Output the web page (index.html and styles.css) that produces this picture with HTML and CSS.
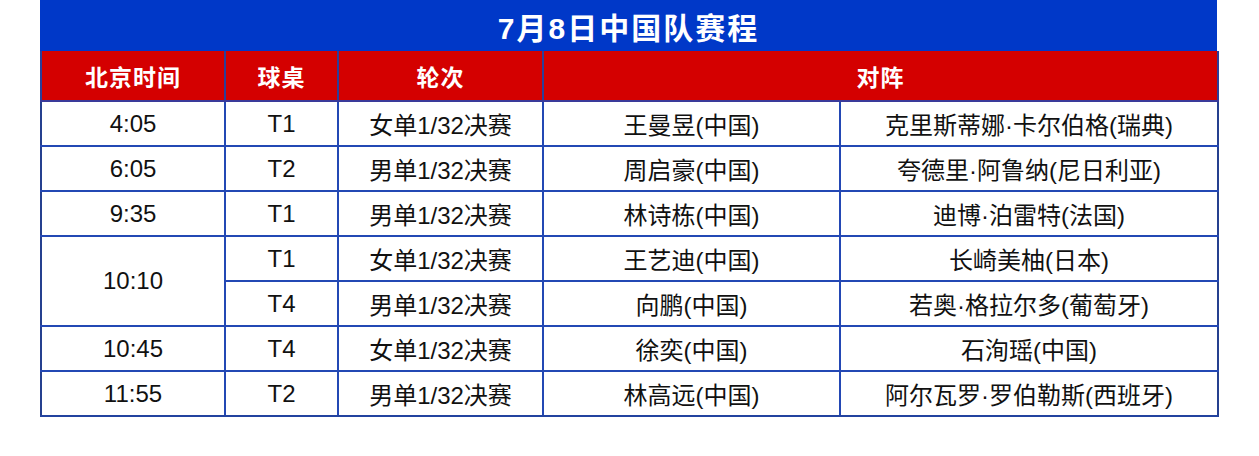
FILE: index.html
```html
<!DOCTYPE html>
<html lang="zh-CN">
<head>
<meta charset="utf-8">
<title>7月8日中国队赛程</title>
<link rel="stylesheet" href="styles.css">
</head>
<body>
<div class="wrap">
  <div class="title">7月8日中国队赛程</div>
  <table class="schedule">
    <colgroup>
      <col class="c-time"><col class="c-table"><col class="c-round"><col class="c-p1"><col class="c-p2">
    </colgroup>
    <thead>
      <tr>
        <th>北京时间</th>
        <th>球桌</th>
        <th>轮次</th>
        <th colspan="2">对阵</th>
      </tr>
    </thead>
    <tbody>
      <tr><td>4:05</td><td>T1</td><td>女单1/32决赛</td><td>王曼昱(中国)</td><td>克里斯蒂娜·卡尔伯格(瑞典)</td></tr>
      <tr><td>6:05</td><td>T2</td><td>男单1/32决赛</td><td>周启豪(中国)</td><td>夸德里·阿鲁纳(尼日利亚)</td></tr>
      <tr><td>9:35</td><td>T1</td><td>男单1/32决赛</td><td>林诗栋(中国)</td><td>迪博·泊雷特(法国)</td></tr>
      <tr><td rowspan="2">10:10</td><td>T1</td><td>女单1/32决赛</td><td>王艺迪(中国)</td><td>长崎美柚(日本)</td></tr>
      <tr><td>T4</td><td>男单1/32决赛</td><td>向鹏(中国)</td><td>若奥·格拉尔多(葡萄牙)</td></tr>
      <tr><td>10:45</td><td>T4</td><td>女单1/32决赛</td><td>徐奕(中国)</td><td>石洵瑶(中国)</td></tr>
      <tr><td>11:55</td><td>T2</td><td>男单1/32决赛</td><td>林高远(中国)</td><td>阿尔瓦罗·罗伯勒斯(西班牙)</td></tr>
    </tbody>
  </table>
</div>
</body>
</html>
```

FILE: styles.css
```css
html, body {
  margin: 0;
  padding: 0;
  background: #ffffff;
}

body {
  font-family: "Liberation Sans", "Noto Sans CJK SC", sans-serif;
  color: #111111;
}

.wrap {
  width: 1177px;
  margin-left: 40px;
}

.title {
  height: 51px;
  background: #0038c8;
  color: #ffffff;
  font-size: 30px;
  font-weight: bold;
  letter-spacing: 2px;
  display: flex;
  align-items: center;
  justify-content: center;
  box-sizing: border-box;
}

.schedule {
  width: 1177px;
  border-collapse: collapse;
  table-layout: fixed;
}

.c-time { width: 184px; }
.c-table { width: 113px; }
.c-round { width: 205px; }
.c-p1 { width: 297px; }
.c-p2 { width: 378px; }

.schedule th {
  background: #d40000;
  color: #ffffff;
  font-size: 23px;
  font-weight: bold;
  letter-spacing: 1px;
  height: 49px;
  padding: 0;
  border-left: 2px solid #2b3f9a;
  border-right: 2px solid #2b3f9a;
  border-bottom: 2px solid #3a3a9a;
  text-align: center;
  vertical-align: middle;
}

.schedule td {
  font-size: 24px;
  height: 43px;
  padding: 0;
  text-align: center;
  vertical-align: middle;
  border: 2px solid #2348b4;
}

.schedule tbody tr:last-child td {
  border-bottom: 2px solid #23439f;
}

.schedule td:first-child {
  border-left: 2px solid #25408f;
}

.schedule td:last-child {
  border-right: 2px solid #25408f;
}
```
